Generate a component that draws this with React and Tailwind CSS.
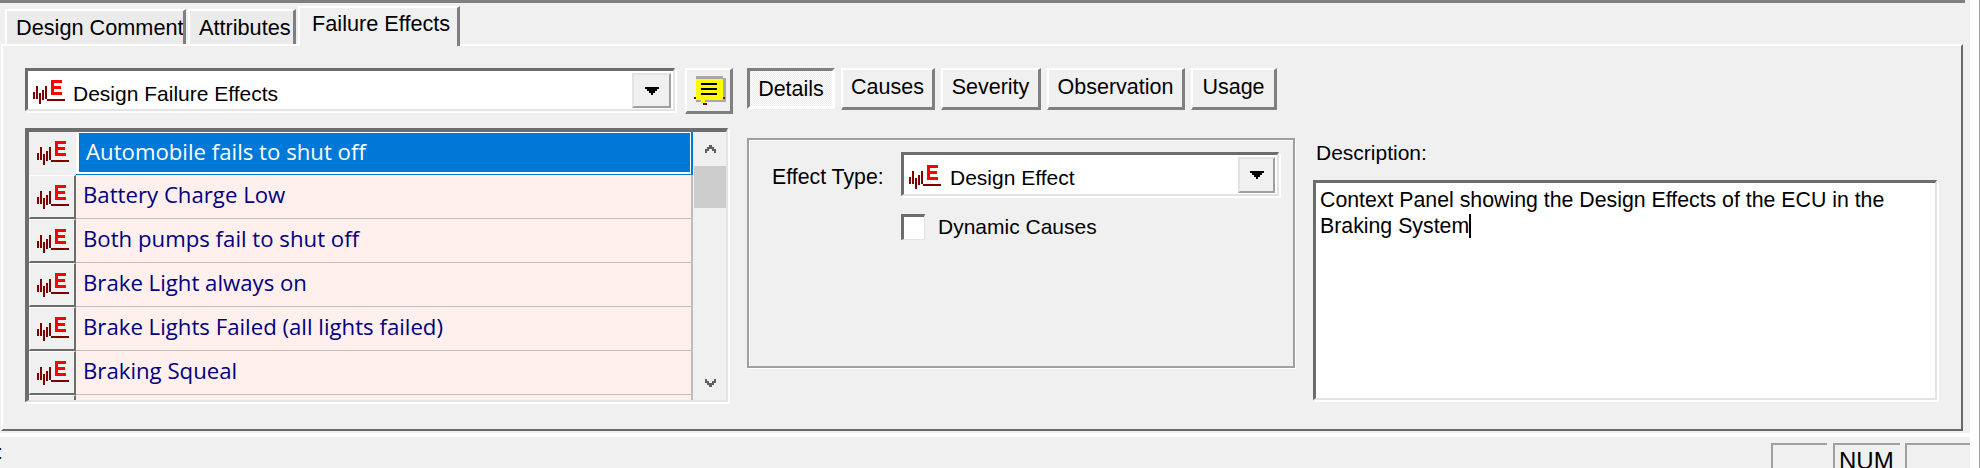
const ui = { fontFamily: '"Liberation Sans", Arial, sans-serif' };
const rowFont = { fontFamily: '"Open Sans", "Noto Sans", sans-serif' };

function EffectIcon({ className }) {
  return (
    <svg width="32" height="24" viewBox="0 0 32 24" className={`shrink-0 ${className || ""}`} shapeRendering="crispEdges">
      <path fill="#800000" d="M0 12h2v7H0zM3 6h2v13H3zM6 13h2v11H6zM9 10h2v10H9zM12 6h2v13h-2zM14 19h18v2H14z" />
      <path fill="#ff0000" d="M18 0h11v3h-8v3h7v3h-7v3h8v3H18z" />
    </svg>
  );
}

function Arrow() {
  return (
    <svg width="14" height="8" viewBox="0 0 14 8" shapeRendering="crispEdges">
      <path fill="#000" d="M0 0h14v2h-2v2h-2v2H8v2H6V6H4V4H2V2H0z" />
    </svg>
  );
}

function Note() {
  return (
    <svg width="32" height="32" viewBox="0 0 32 32" className="shrink-0" shapeRendering="crispEdges">
      <path fill="#a8a8a8" d="M2 1h27v2h3v24H2z" />
      <path fill="#ffff00" d="M2 4h27v21H2zM7 25h4v3H7z" />
      <path fill="#800000" d="M0 22h2v2H0zM29 22h2v2h-2zM9 28h4v2H9z" />
      <path fill="#000" d="M7 8h16v2H7zM7 13h16v2H7zM7 18h16v2H7z" />
    </svg>
  );
}

function Chevron({ up }) {
  return (
    <svg width="11" height="9" viewBox="0 0 11 9" shapeRendering="crispEdges" className={up ? "" : "rotate-180"}>
      <path fill="#606060" d="M4 0h3v2h2v2h2v4H9V6H7V4H4v2H2v2H0V4h2V2h2z" />
    </svg>
  );
}

function DropButton({ className }) {
  return (
    <div className={`flex items-center justify-center bg-[#f0f0f0] border-t-2 border-l-2 border-r-2 border-b-2 border-t-[#e3e3e3] border-l-[#e3e3e3] border-r-[#a0a0a0] border-b-[#a0a0a0] ${className}`}>
      <Arrow />
    </div>
  );
}

function TabItem({ label, w, active, className }) {
  return (
    <div
      className={`box-border overflow-hidden whitespace-nowrap border-t-2 border-l-2 border-r-[3px] border-t-white border-l-white border-r-[#7f7f7f] text-[21.7px] leading-[24px] text-black ${active ? "h-10 -mb-[2px] relative z-10 pt-1 pl-3 bg-[#f0f0f0]" : "h-[35px] pt-[5px] pl-[9px] bg-[#ebebeb]"} ${className || ""}`}
      style={{ width: w }}
    >
      {label}
    </div>
  );
}

function ToolButton({ label, w, pressed }) {
  if (pressed) {
    return (
      <div
        className="box-border h-[41px] pt-[2px] flex items-center justify-center text-[21.5px] border-t-[3px] border-l-[3px] border-r-[3px] border-b-[3px] border-t-[#7f7f7f] border-l-[#7f7f7f] border-r-white border-b-white bg-[repeating-conic-gradient(#ffffff_0_25%,#ececec_0_50%)] bg-[length:2px_2px]"
        style={{ width: w }}
      >
        {label}
      </div>
    );
  }
  return (
    <div
      className="box-border h-[42px] pb-[2px] flex items-center justify-center text-[21.5px] border-t-2 border-l-2 border-r-[3px] border-b-[3px] border-t-white border-l-white border-r-[#7f7f7f] border-b-[#7f7f7f]"
      style={{ width: w }}
    >
      {label}
    </div>
  );
}

function Row({ label, selected }) {
  if (selected) {
    return (
      <div className="flex h-[43px] shrink-0">
        <div className="w-[47px] shrink-0 flex items-center pl-2 pb-[2px] bg-[#f0f0f0]">
          <EffectIcon />
        </div>
        <div className="flex-1 min-w-0 border-b border-r-2 border-b-[#0078d7] border-r-[#0078d7] bg-white pl-[3px] pt-px pb-[2px] pr-px">
          <div className="h-full bg-[#0078d7] text-white pl-[7px] flex items-center text-[22.2px] pb-[2px]" style={rowFont}>
            {label}
          </div>
        </div>
      </div>
    );
  }
  return (
    <div className="flex h-[44px] shrink-0">
      <div className="box-border w-[47px] shrink-0 flex items-center pl-[7px] bg-[#f0f0f0] border-t border-l border-t-white border-l-white border-r-2 border-b-2 border-r-[#6d6d6d] border-b-[#6d6d6d]">
        <EffectIcon />
      </div>
      <div className="flex-1 min-w-0 bg-[#ffefed] border-b border-r-2 border-b-[#bdbdbd] border-r-[#bdbdbd] pl-[7px] flex items-center text-[22.2px] text-[#000080] pb-1" style={rowFont}>
        {label}
      </div>
    </div>
  );
}

const effects = [
  "Battery Charge Low",
  "Both pumps fail to shut off",
  "Brake Light always on",
  "Brake Lights Failed (all lights failed)",
  "Braking Squeal",
  "",
];

export default function App() {
  return (
    <div className="w-[1980px] h-[468px] bg-[#f0f0f0] overflow-hidden text-black flex" style={ui}>
      <div className="w-[1970px] shrink-0 flex flex-col">
        <div className="w-[1965px] h-[3px] bg-[#7f7f7f] shrink-0" />
        <div className="h-[41px] shrink-0 flex items-end pl-[5px] gap-[2px]">
          <TabItem label="Design Comment" w={181} />
          <TabItem label="Attributes" w={108} />
          <TabItem label="Failure Effects" w={162} active />
        </div>

        <div className="box-border ml-px mr-[7px] h-[387px] shrink-0 flex border-t-2 border-l-2 border-t-white border-l-white border-r-2 border-b-2 border-r-[#696969] border-b-[#696969] pl-[22px] pt-[22px]">
          {/* left column */}
          <div className="w-[708px] shrink-0 flex flex-col">
            <div className="flex items-start gap-[10px]">
              <div className="box-border w-[650px] h-[43px] flex items-center bg-white border-t-[3px] border-l-[3px] border-r-2 border-b-2 border-t-[#6d6d6d] border-l-[#6d6d6d] border-r-[#e3e3e3] border-b-[#e3e3e3] shadow-[2px_2px_0_#ffffff] pl-[5px] pr-[2px]">
                <EffectIcon className="mt-1" />
                <span className="ml-[8px] pt-[7px] text-[21px] flex-1">Design Failure Effects</span>
                <DropButton className="w-[39px] h-[35px] mt-px" />
              </div>
              <div className="box-border w-[48px] h-[46px] flex items-center justify-center pl-[3px] border-t-2 border-l-2 border-r-[3px] border-b-[3px] border-t-white border-l-white border-r-[#7f7f7f] border-b-[#7f7f7f]">
                <Note />
              </div>
            </div>

            <div className="box-border mt-[14px] w-[703px] h-[274px] flex bg-[#f0f0f0] border-t-4 border-l-4 border-t-[#6d6d6d] border-l-[#6d6d6d] border-r-2 border-b-2 border-r-[#e3e3e3] border-b-[#e3e3e3] shadow-[2px_2px_0_#ffffff]">
              <div className="w-[664px] h-[268px] shrink-0 overflow-hidden flex flex-col">
                <Row label="Automobile fails to shut off" selected />
                {effects.map((e, i) => (
                  <Row key={i} label={e} />
                ))}
              </div>
              <div className="flex-1 flex flex-col pl-px">
                <div className="h-[34px] flex items-center justify-center">
                  <Chevron up />
                </div>
                <div className="h-[42px] bg-[#cdcdcd]" />
                <div className="flex-1" />
                <div className="h-[36px] flex items-center justify-center">
                  <Chevron />
                </div>
              </div>
            </div>
          </div>

          {/* middle column */}
          <div className="ml-[14px] w-[548px] shrink-0 flex flex-col">
            <div className="flex items-start gap-[6px]">
              <ToolButton label="Details" w={88} pressed />
              <ToolButton label="Causes" w={94} />
              <ToolButton label="Severity" w={100} />
              <ToolButton label="Observation" w={138} />
              <ToolButton label="Usage" w={86} />
            </div>
            <div className="box-border mt-[28px] w-[548px] h-[230px] border-2 border-[#a0a0a0] shadow-[1px_1px_0_#ffffff,inset_1px_1px_0_#ffffff] pt-[12px] pl-[23px]">
              <div className="flex">
                <div className="w-[129px] shrink-0 text-[21.3px] pt-[10px]">Effect Type:</div>
                <div className="box-border w-[378px] h-[44px] flex items-center bg-white border-t-[3px] border-l-[3px] border-r-2 border-b-2 border-t-[#6d6d6d] border-l-[#6d6d6d] border-r-[#e3e3e3] border-b-[#e3e3e3] shadow-[2px_2px_0_#ffffff] pl-[5px] pr-[2px]">
                  <EffectIcon className="mt-[5px]" />
                  <span className="ml-[9px] pt-[7px] text-[21px] flex-1">Design Effect</span>
                  <DropButton className="w-[37px] h-[36px]" />
                </div>
              </div>
              <div className="flex items-center mt-[15px] ml-[129px]">
                <div className="box-border w-[24px] h-[26px] bg-white border-t-[3px] border-l-[3px] border-r border-b border-t-[#6d6d6d] border-l-[#6d6d6d] border-r-[#e3e3e3] border-b-[#e3e3e3]" />
                <span className="ml-[13px] text-[21px]">Dynamic Causes</span>
              </div>
            </div>
          </div>

          {/* right column */}
          <div className="ml-[18px] w-[626px] shrink-0 pt-[73px]">
            <div className="h-6 leading-6 pl-[3px] text-[21px]">Description:</div>
            <div className="box-border mt-[15px] w-[624px] h-[220px] bg-white border-t-[3px] border-l-[3px] border-r-2 border-b-2 border-t-[#6d6d6d] border-l-[#6d6d6d] border-r-[#e3e3e3] border-b-[#e3e3e3] shadow-[2px_2px_0_#ffffff] pl-1 pt-1 text-[21.3px] leading-[26px]">
              <div>Context Panel showing the Design Effects of the ECU in the</div>
              <div className="flex items-center">
                Braking System
                <span className="inline-block w-[2px] h-[24px] bg-black" />
              </div>
            </div>
          </div>
        </div>

        {/* status bar */}
        <div className="shrink-0 mt-[2px] h-[4px] bg-white" />
        <div className="flex-1 flex pt-[6px]">
          <span className="text-[21px] -ml-[3px] -mt-[2px] leading-[22px]">:</span>
          <div className="flex-1" />
          <div className="box-border w-[56px] h-[40px] border-t-2 border-l-2 border-t-[#a0a0a0] border-l-[#a0a0a0]" />
          <div className="box-border ml-[6px] w-[67px] h-[40px] border-t-2 border-l-2 border-t-[#a0a0a0] border-l-[#a0a0a0] pl-[4px] pt-[2px] text-[24px] leading-[28px]">NUM</div>
          <div className="box-border ml-[5px] w-[65px] h-[40px] border-t-2 border-l-2 border-t-[#a0a0a0] border-l-[#a0a0a0]" />
        </div>
      </div>
      <div className="flex-1 bg-white border-r border-r-[#a0a0a0]" />
    </div>
  );
}
